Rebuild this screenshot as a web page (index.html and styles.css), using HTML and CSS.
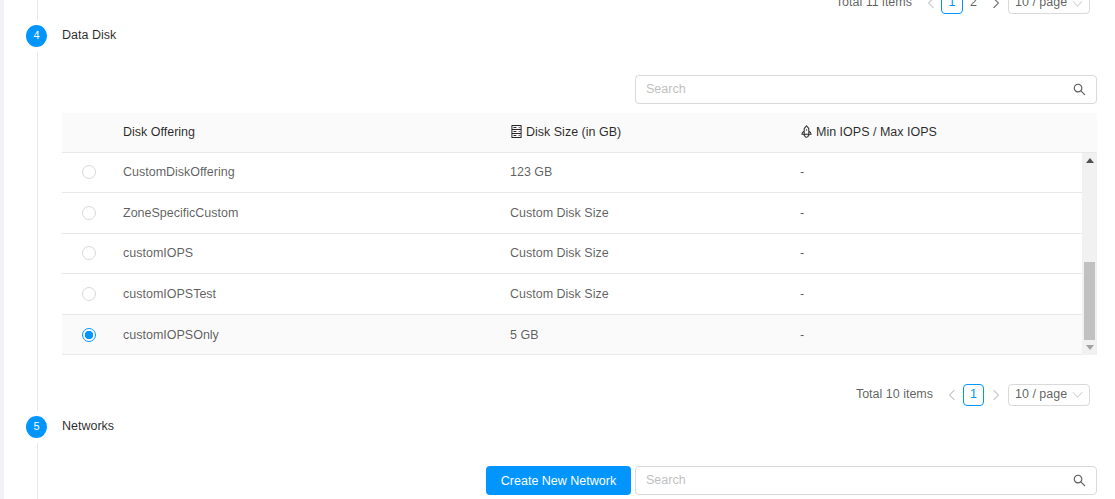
FILE: index.html
```html
<!DOCTYPE html>
<html lang="en">
<head>
<meta charset="utf-8">
<title>Data Disk</title>
<link rel="stylesheet" href="styles.css">
</head>
<body>
<main class="page">
  <section class="step step-prev">
    <div class="rail"><span class="line"></span></div>
    <div class="content">
      <div class="pager pager-clipped">
        <span class="total">Total 11 items</span>
        <span class="arrow muted"><svg viewBox="0 0 10 10"><path d="M7 1 3 5l4 4"/></svg></span>
        <span class="pg active">1</span>
        <span class="pg">2</span>
        <span class="arrow"><svg viewBox="0 0 10 10"><path d="m3 1 4 4-4 4"/></svg></span>
        <span class="size">10 / page<svg viewBox="0 0 12 12"><path d="M1 3.5 6 9l5-5.500"/></svg></span>
      </div>
    </div>
  </section>

  <section class="step step-disk">
    <div class="rail"><span class="dot">4</span><span class="line"></span></div>
    <div class="content">
      <div class="title">Data Disk</div>
      <div class="toolbar toolbar-disk">
        <div class="search">
          <span class="placeholder">Search</span>
          <svg class="search-icon" viewBox="64 64 896 896"><path d="M909.6 854.5 649.9 594.8C690.2 542.7 712 479 712 412c0-80.200-31.300-155.400-87.900-212.100-56.600-56.700-132-87.900-212.100-87.900s-155.500 31.300-212.100 87.900C143.200 256.500 112 331.800 112 412c0 80.100 31.300 155.500 87.900 212.100C256.500 680.800 331.800 712 412 712c67 0 130.600-21.800 182.700-62l259.700 259.600a8.200 8.200 0 0 0 11.600 0l43.600-43.500a8.200 8.200 0 0 0 0-11.600zM570.400 570.400C528 612.700 471.800 636 412 636s-116-23.300-158.400-65.600C211.300 528 188 471.800 188 412s23.300-116.100 65.600-158.400C296 211.300 352.200 188 412 188s116.100 23.200 158.400 65.600S636 352.200 636 412s-23.300 116.100-65.600 158.400z"/></svg>
        </div>
      </div>

      <div class="table">
        <div class="thead">
          <span></span>
          <span>Disk Offering</span>
          <span class="th-icon"><svg viewBox="64 64 896 896"><path d="M832 64H192c-17.700 0-32 14.300-32 32v832c0 17.700 14.300 32 32 32h640c17.700 0 32-14.300 32-32V96c0-17.700-14.300-32-32-32zm-600 72h560v208H232V136zm560 480H232V408h560v208zm0 272H232V680h560v208zM496 208H312c-4.400 0-8 3.600-8 8v48c0 4.400 3.600 8 8 8h184c4.400 0 8-3.600 8-8v-48c0-4.400-3.600-8-8-8zm0 272H312c-4.400 0-8 3.600-8 8v48c0 4.400 3.600 8 8 8h184c4.400 0 8-3.600 8-8v-48c0-4.400-3.600-8-8-8zm0 272H312c-4.400 0-8 3.600-8 8v48c0 4.400 3.600 8 8 8h184c4.400 0 8-3.600 8-8v-48c0-4.400-3.600-8-8-8zM656 240a40 40 0 1 0 80 0 40 40 0 1 0-80 0zm0 272a40 40 0 1 0 80 0 40 40 0 1 0-80 0zm0 272a40 40 0 1 0 80 0 40 40 0 1 0-80 0z"/></svg>Disk Size (in GB)</span>
          <span class="th-icon"><svg viewBox="64 64 896 896"><path d="M864 736c0-111.600-65.400-208-160-252.900V317.300c0-15.100-5.300-29.700-15.100-41.200L536.500 95.400C530.100 87.800 521 84 512 84s-18.100 3.800-24.500 11.400L335.100 276.100a63.970 63.970 0 0 0-15.100 41.200v165.800C225.400 528 160 624.400 160 736h156.500c-2.300 7.200-3.500 15-3.500 23.800 0 22.100 7.600 43.700 21.400 60.800a97.200 97.200 0 0 0 43.100 30.600c23.100 54 75.600 88.800 134.500 88.800 29.100 0 57.300-8.600 81.400-24.800 23.600-15.800 41.900-37.900 53-64a97 97 0 0 0 43.100-30.500 97.520 97.520 0 0 0 21.400-60.800c0-8.400-1.100-16.400-3.100-23.800H864zM762.300 621.400c9.400 14.600 17 30.300 22.500 46.600H700V558.700a211.600 211.600 0 0 1 62.300 62.700zM388 483.100V318.800l124-147 124 147V668H388V483.100zM239.200 668c5.500-16.300 13.100-32 22.500-46.600 16.300-25.200 37.500-46.500 62.300-62.700V668h-84.800zm388.900 116.200c-5.200 3-11.200 4.200-17.100 3.400l-19.500-2.400-2.800 19.400c-5.400 37.900-38.400 66.500-76.700 66.500-38.300 0-71.300-28.600-76.700-66.500l-2.800-19.500-19.500 2.500a27.800 27.800 0 0 1-17.100-3.500c-8.700-5-14.100-14.300-14.100-24.400 0-10.600 5.900-19.400 14.600-23.800h231.300c8.800 4.500 14.600 13.300 14.600 23.800-.1 10.200-5.500 19.600-14.200 24.500zM464 400a48 48 0 1 0 96 0 48 48 0 1 0-96 0z"/></svg>Min IOPS / Max IOPS</span>
        </div>
        <div class="tbody">
          <div class="rows">
            <div class="row"><span class="radio"></span><span>CustomDiskOffering</span><span>123 GB</span><span>-</span></div>
            <div class="row"><span class="radio"></span><span>ZoneSpecificCustom</span><span>Custom Disk Size</span><span>-</span></div>
            <div class="row"><span class="radio"></span><span>customIOPS</span><span>Custom Disk Size</span><span>-</span></div>
            <div class="row"><span class="radio"></span><span>customIOPSTest</span><span>Custom Disk Size</span><span>-</span></div>
            <div class="row selected"><span class="radio checked"></span><span>customIOPSOnly</span><span>5 GB</span><span>-</span></div>
          </div>
          <div class="scrollbar">
            <span class="sb-up"></span>
            <span class="sb-thumb"></span>
            <span class="sb-down"></span>
          </div>
        </div>
      </div>

      <div class="pager pager-disk">
        <span class="total">Total 10 items</span>
        <span class="arrow muted"><svg viewBox="0 0 10 10"><path d="M7 1 3 5l4 4"/></svg></span>
        <span class="pg active">1</span>
        <span class="arrow muted"><svg viewBox="0 0 10 10"><path d="m3 1 4 4-4 4"/></svg></span>
        <span class="size">10 / page<svg viewBox="0 0 12 12"><path d="M1 3.500 6 9l5-5.500"/></svg></span>
      </div>
    </div>
  </section>

  <section class="step step-net">
    <div class="rail"><span class="dot">5</span><span class="line"></span></div>
    <div class="content">
      <div class="title">Networks</div>
      <div class="toolbar toolbar-net">
        <button class="primary" type="button">Create New Network</button>
        <div class="search">
          <span class="placeholder">Search</span>
          <svg class="search-icon" viewBox="64 64 896 896"><path d="M909.6 854.5 649.9 594.8C690.2 542.7 712 479 712 412c0-80.200-31.300-155.400-87.900-212.100-56.600-56.700-132-87.900-212.100-87.900s-155.500 31.300-212.100 87.900C143.200 256.500 112 331.800 112 412c0 80.100 31.300 155.500 87.900 212.100C256.500 680.800 331.800 712 412 712c67 0 130.600-21.800 182.700-62l259.700 259.600a8.200 8.200 0 0 0 11.600 0l43.600-43.500a8.200 8.200 0 0 0 0-11.600zM570.400 570.400C528 612.700 471.800 636 412 636s-116-23.300-158.400-65.600C211.300 528 188 471.800 188 412s23.300-116.100 65.600-158.400C296 211.300 352.200 188 412 188s116.100 23.200 158.400 65.600S636 352.200 636 412s-23.300 116.100-65.600 158.400z"/></svg>
        </div>
      </div>
    </div>
  </section>
</main>
</body>
</html>
```

FILE: styles.css
```css
* { box-sizing: border-box; }

html, body { height: 100%; }

body {
  margin: 0;
  background: #f0f2f5;
  font-family: "Liberation Sans", Arial, sans-serif;
  font-size: 12.5px;
  line-height: 18px;
  color: rgba(0, 0, 0, 0.65);
  overflow: hidden;
}

.page {
  margin-left: 4px;
  height: 499px;
  background: #fff;
  overflow: hidden;
  display: flex;
  flex-direction: column;
  padding-right: 18px;
}

.step { display: flex; }
.step-prev { height: 25px; }
.step-disk { height: 391px; }
.step-net { height: 83px; }

.rail {
  width: 58px;
  flex: none;
  display: flex;
  flex-direction: column;
  padding-left: 33px;
}

.dot {
  width: 21px;
  height: 22px;
  margin-left: -11px;
  border-radius: 50%;
  background: #0095ff;
  color: #fff;
  font-size: 11px;
  line-height: 21px;
  text-align: center;
  flex: none;
}

.line {
  display: block;
  width: 1px;
  flex: 1;
  background: #e8e8e8;
  margin: 5px 0;
}

.step-prev .line { margin-top: 0; }
.step-net .line { margin-bottom: 0; }

.content { flex: 1; min-width: 0; }

.title {
  color: rgba(0, 0, 0, 0.85);
  height: 18px;
  padding-top: 1px;
}

.toolbar { display: flex; justify-content: flex-end; gap: 4px; }
.toolbar-disk { margin-top: 32px; }
.toolbar-net { margin-top: 32px; }

.search {
  width: 462px;
  height: 29px;
  border: 1px solid #d9d9d9;
  border-radius: 4px;
  display: flex;
  align-items: center;
  justify-content: space-between;
  padding: 0 10px 0 10px;
}

.placeholder { color: #bfbfbf; margin-top: -1px; }

.search-icon { width: 13px; height: 13px; fill: rgba(0, 0, 0, 0.65); }

.primary {
  width: 145px;
  height: 29px;
  border: 0;
  border-radius: 4px;
  background: #0095ff;
  color: #fff;
  font: inherit;
  padding: 0;
}

.table { margin-top: 9px; }

.thead {
  display: grid;
  grid-template-columns: 61px 387px 290px 1fr;
  align-items: center;
  height: 40px;
  background: #fafafa;
  border-bottom: 1px solid #e8e8e8;
  color: rgba(0, 0, 0, 0.85);
  padding-bottom: 2px;
}

.th-icon { display: flex; align-items: center; gap: 3px; }
.th-icon svg { width: 13px; height: 13px; fill: rgba(0, 0, 0, 0.85); flex: none; }

.tbody { display: flex; }
.rows { flex: 1; min-width: 0; }

.row {
  display: grid;
  grid-template-columns: 61px 387px 290px 1fr;
  align-items: center;
  height: 40.4px;
  border-bottom: 1px solid #e8e8e8;
  padding-bottom: 0.6px;
}

.row.selected { background: #fafafa; padding-top: 1.2px; }

.radio {
  display: block;
  width: 14px;
  height: 14px;
  margin-left: 20px;
  border: 1px solid #d9d9d9;
  border-radius: 50%;
  background: #fff;
}

.radio.checked {
  border-color: #0095ff;
  background: radial-gradient(circle, #0095ff 0 4px, #fff 4.5px);
}

.scrollbar {
  width: 15px;
  flex: none;
  background: #f1f1f1;
  display: flex;
  flex-direction: column;
  align-items: center;
}

.sb-up {
  margin-top: 5px;
  border: 4px solid transparent;
  border-top: 0;
  border-bottom: 5px solid #505050;
}

.sb-thumb {
  width: 11px;
  height: 78px;
  margin-top: 99px;
  background: #c1c1c1;
}

.sb-down {
  margin-top: 5px;
  border: 4px solid transparent;
  border-bottom: 0;
  border-top: 5px solid #a3a3a3;
}

.pager {
  display: flex;
  align-items: center;
  justify-content: flex-end;
  height: 22px;
  padding-right: 7px;
}

.pager-clipped { margin-top: -8px; }
.pager-clipped .pg.active { width: 22px; margin-left: -1px; }
.pager-disk { margin-top: 29px; }

.total { margin-right: 7px; margin-top: -2px; }

.arrow {
  width: 21px;
  height: 22px;
  margin: 0 1px;
  display: flex;
  align-items: center;
  justify-content: center;
}

.arrow svg { width: 12px; height: 12px; fill: none; stroke: rgba(0, 0, 0, 0.65); stroke-width: 0.85; }
.arrow.muted svg { stroke: rgba(0, 0, 0, 0.25); }

.pg {
  width: 21px;
  height: 22px;
  text-align: center;
  line-height: 19px;
  border: 1px solid transparent;
  border-radius: 4px;
}

.pg.active { color: #0095ff; border-color: #0095ff; }

.size {
  width: 82px;
  height: 22px;
  margin-left: 1px;
  border: 1px solid #d9d9d9;
  border-radius: 4px;
  padding: 0 6px 2px;
  display: flex;
  align-items: center;
  justify-content: space-between;
}

.size svg { width: 11px; height: 11px; fill: none; stroke: rgba(0, 0, 0, 0.25); stroke-width: 1; flex: none; margin-top: 2px; }
```
